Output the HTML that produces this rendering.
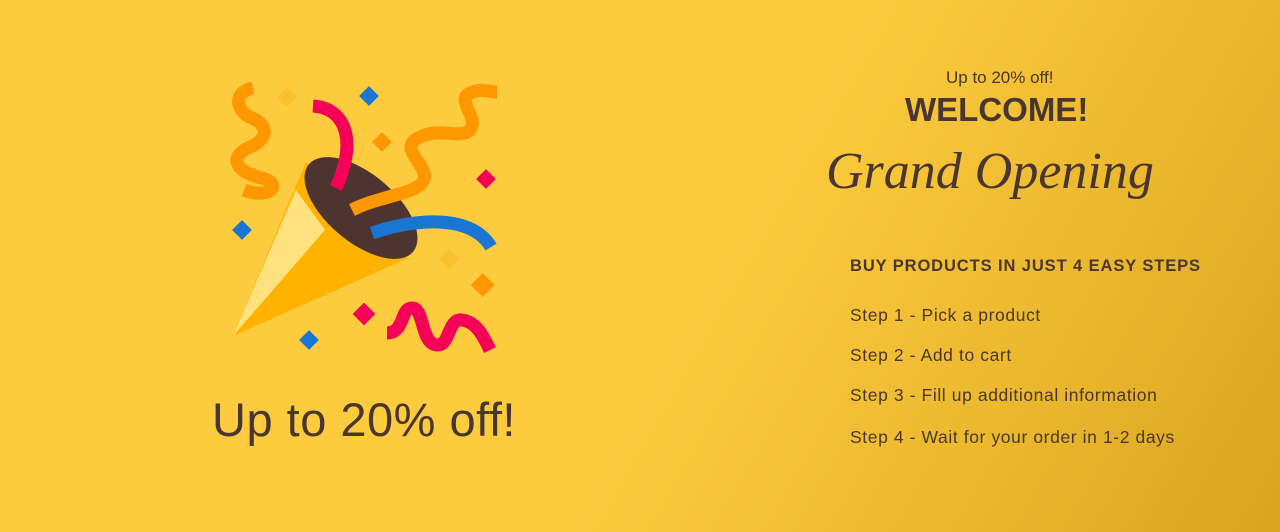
<!DOCTYPE html>
<html><head><meta charset="utf-8"><style>
html,body{margin:0;padding:0}
body{width:1280px;height:532px;overflow:hidden;position:relative;font-family:"Liberation Sans",sans-serif;color:#4a3631;
background:linear-gradient(120deg,#fdcb3e 0%,#fdcb3e 55%,#f0bd32 72%,#d9a51e 100%);}
.t{position:absolute;white-space:nowrap}
</style></head><body>
<svg width="1280" height="532" style="position:absolute;left:0;top:0">
<polygon points="233,336 306,162 408,258" fill="#ffb300"/>
<polygon points="233,336 296,190 325,230" fill="#ffe180"/>
<ellipse cx="361" cy="208" rx="68" ry="34" transform="rotate(40 361 208)" fill="#4e342e"/>
<g fill="none" stroke-linecap="butt">
<path d="M253,88 C232,92 236,112 252,118 C270,126 268,140 248,148 C228,158 236,172 262,178 C284,184 270,200 244,190" stroke="#ff9800" stroke-width="13"/>
<path d="M313,106 C345,108 358,140 336,188" stroke="#f50057" stroke-width="13"/>
<path d="M352,210 C380,196 405,196 420,185 C438,170 395,150 418,138 C440,126 460,140 470,130 C480,118 455,100 470,93 C480,88 490,92 497,92" stroke="#ff9800" stroke-width="13"/>
<path d="M372,233 C410,220 470,212 491,247" stroke="#1976d2" stroke-width="13"/>
<path d="M387,333 C405,333 400,308 412,308 C425,308 420,345 438,345 C450,345 448,318 462,320 C478,322 485,340 490,350" stroke="#f50057" stroke-width="13"/>
</g>
<g>
<rect x="362" y="89" width="14" height="14" fill="#1976d2" transform="rotate(45 369 96)"/>
<rect x="280" y="90" width="14" height="14" fill="#fbc02d" transform="rotate(45 287 97)"/>
<rect x="375" y="135" width="14" height="14" fill="#ff9800" transform="rotate(45 382 142)"/>
<rect x="479" y="172" width="14" height="14" fill="#f50057" transform="rotate(45 486 179)"/>
<rect x="235" y="223" width="14" height="14" fill="#1976d2" transform="rotate(45 242 230)"/>
<rect x="442" y="252" width="14" height="14" fill="#fbc02d" transform="rotate(45 449 259)"/>
<rect x="474" y="276" width="17" height="17" fill="#ff9800" transform="rotate(45 482 285)"/>
<rect x="356" y="306" width="16" height="16" fill="#f50057" transform="rotate(45 364 314)"/>
<rect x="302" y="333" width="14" height="14" fill="#1976d2" transform="rotate(45 309 340)"/>
</g>
</svg>
<div class="t" style="left:212px;top:392px;font-size:47px;letter-spacing:0.5px">Up to 20% off!</div>
<div class="t" style="left:946px;top:68px;font-size:17px">Up to 20% off!</div>
<div class="t" style="left:905px;top:91px;font-size:33px;font-weight:900;letter-spacing:0px">WELCOME!</div>
<div class="t" style="left:826px;top:142px;font-size:52px;font-family:'Liberation Serif',serif;font-style:italic;letter-spacing:0px">Grand Opening</div>
<div class="t" style="left:850px;top:257px;font-size:16.5px;font-weight:bold;letter-spacing:0.9px">BUY PRODUCTS IN JUST 4 EASY STEPS</div>
<div class="t" style="left:850px;top:305px;font-size:17.5px;letter-spacing:0.6px">Step 1 - Pick a product</div>
<div class="t" style="left:850px;top:345px;font-size:17.5px;letter-spacing:0.6px">Step 2 - Add to cart</div>
<div class="t" style="left:850px;top:385px;font-size:17.5px;letter-spacing:0.6px">Step 3 - Fill up additional information</div>
<div class="t" style="left:850px;top:427px;font-size:17.5px;letter-spacing:0.6px">Step 4 - Wait for your order in 1-2 days</div>
</body></html>
